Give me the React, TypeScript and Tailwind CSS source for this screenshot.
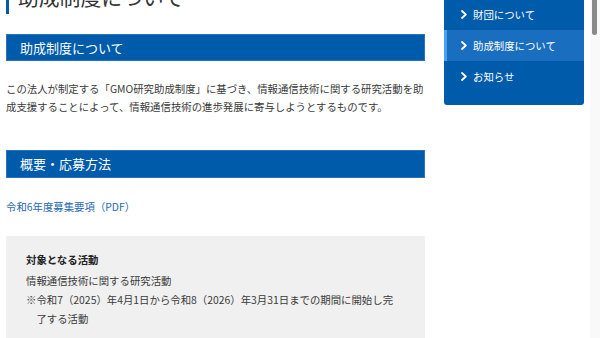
import React from "react";

const Chevron = () => (
  <svg width="6" height="9" viewBox="0 0 6 9" className="shrink-0">
    <polyline points="1,1 4.8,4.5 1,8" fill="none" stroke="white" strokeWidth="1.8" strokeLinecap="round" strokeLinejoin="round" />
  </svg>
);

const NavItem = ({ label, active }: { label: string; active?: boolean }) => (
  <div
    className={
      "h-[31px] flex items-center gap-[6px] border-l-[3px] pl-[14px] text-white text-[10.4px] " +
      (active ? "bg-[#1a6ebf] border-[#46a3f0]" : "border-transparent")
    }
  >
    <Chevron />
    <span>{label}</span>
  </div>
);

export default function App() {
  return (
    <div
      className="w-[600px] h-[338px] overflow-hidden bg-white flex"
      style={{ fontFamily: '"Noto Sans CJK JP", "Noto Sans", sans-serif' }}
    >
      <div className="pl-[6px] flex gap-[19px]">
        <main className="w-[419px] flex flex-col">
          <div className="h-[14px] border-l-[3px] border-[#005bab] pl-[9px]">
            <div className="-mt-[13px] text-[20.8px] leading-[21px] text-[#333] whitespace-nowrap">
              助成制度について
            </div>
          </div>

          <h2 className="mt-[20px] h-[28px] flex items-center bg-[#005bab] border border-[#2b73bb] pl-[13px] text-white text-[13px]">
            助成制度について
          </h2>

          <p className="mt-[19px] text-[10.4px] leading-[18px] text-[#3a3a3a]">
            この法人が制定する「GMO研究助成制度」に基づき、情報通信技術に関する研究活動を助成支援することによって、情報通信技術の進歩発展に寄与しようとするものです。
          </p>

          <h2 className="mt-[34px] h-[28px] flex items-center bg-[#005bab] border border-[#2b73bb] pl-[13px] text-white text-[13px]">
            概要・応募方法
          </h2>

          <a className="mt-[20px] text-[10.4px] leading-[18px] text-[#2468b4]">
            令和6年度募集要項（PDF）
          </a>

          <div className="mt-[20px] bg-[#f0f0f0] px-[20px] pt-[14px] pb-[10px] text-[10.4px] text-[#3a3a3a]">
            <div className="font-bold leading-[19px] mb-[2px] text-[#222]">対象となる活動</div>
            <div className="leading-[19px]">情報通信技術に関する研究活動</div>
            <div className="leading-[19px] pl-[1em] -indent-[1em]">
              ※令和7（2025）年4月1日から令和8（2026）年3月31日までの期間に開始し完
              <br />
              了する活動
            </div>
          </div>
        </main>

        <aside className="w-[140px] self-start -mt-[1px] bg-[#005bab] rounded-b-[3px] pb-[13px]">
          <NavItem label="財団について" />
          <NavItem label="助成制度について" active />
          <NavItem label="お知らせ" />
        </aside>
      </div>

      <div className="ml-auto w-[10px] h-full bg-[#f9f9f9] pl-[2px]">
        <div className="w-[5px] h-[35px] bg-[#8a8a8a] rounded-b-[3px]" />
      </div>
    </div>
  );
}
